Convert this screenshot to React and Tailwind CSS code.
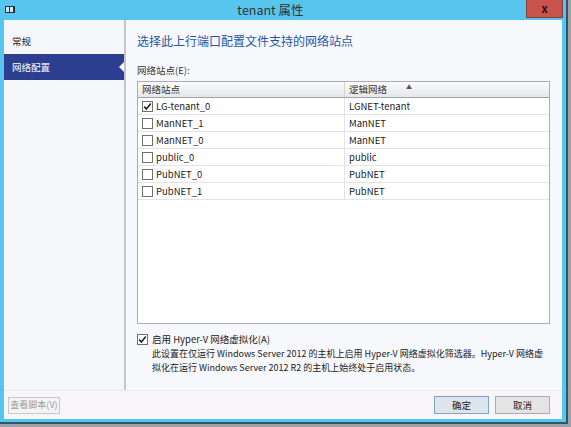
import React from 'react'

const rows = [
  { site: 'LG-tenant_0', net: 'LGNET-tenant', checked: true },
  { site: 'ManNET_1', net: 'ManNET' },
  { site: 'ManNET_0', net: 'ManNET' },
  { site: 'public_0', net: 'public' },
  { site: 'PubNET_0', net: 'PubNET' },
  { site: 'PubNET_1', net: 'PubNET' },
]

const font = { fontFamily: '"Noto Sans CJK SC", "Noto Sans", sans-serif' }

function Check({ checked }){
  return (
    <span className="w-[11px] h-[11px] border border-[#707070] bg-white flex items-center justify-center shrink-0">
      {checked && (
        <svg width="9" height="9" viewBox="0 0 9 9">
          <path d="M1.2 4.6 L3.4 7 L7.8 1.6" fill="none" stroke="#222" strokeWidth="1.6" />
        </svg>
      )}
    </span>
  )
}

export default function App(){
  return (
    <div className="w-[571px] h-[427px] bg-[#9aa3a8] text-[#222] text-[9.5px] overflow-hidden" style={font}>
      <div className="w-[568px] h-[424px] bg-[#58c5ee] border-b-2 border-r-2 border-[#2f5566] flex flex-col">
        {/* title bar */}
        <div className="h-[20px] flex items-start relative shrink-0">
          <div className="mt-[6px] ml-[5px] w-[10px] h-[7px] bg-[#1e3140] flex gap-[1px] p-[1px]">
            <span className="w-[3px] h-[5px] bg-[#cfe9f5]" />
            <span className="w-[3px] h-[5px] bg-[#cfe9f5]" />
          </div>
          <div className="flex-1 text-center text-[12.5px] leading-[20px] text-[#333]">tenant 属性</div>
          <div className="w-[37px] h-[18px] bg-[#c9544f] border border-[#8a3b39] border-t-0 mr-[3px] flex items-center justify-center text-[11px] font-bold text-[#2a0d0c]">x</div>
        </div>

        <div className="mx-[4px] flex-1 flex flex-col bg-[#f7f8fc] mb-[3px]">
          <div className="flex flex-1">
            {/* nav */}
            <div className="w-[120px] shrink-0 bg-[#f5f6fa] pt-[8px] flex flex-col">
              <div className="h-[26px] flex items-center pl-[8px] text-[#222]">常规</div>
              <div className="h-[26px] flex items-center pl-[8px] bg-[#2b3e8f] text-white relative">
                网络配置
                <span className="absolute right-0 top-[8px] w-0 h-0 border-y-[5px] border-y-transparent border-r-[5px] border-r-[#f7f8fc]" />
              </div>
            </div>
            <div className="w-[2px] shrink-0 bg-[#c5c6cc]" />

            {/* content */}
            <div className="flex-1 min-w-0 pl-[11px] pr-[12px] pt-[12px] flex flex-col">
              <div className="text-[12px] leading-[18px] text-[#1f57a4]">选择此上行端口配置文件支持的网络站点</div>
              <div className="mt-[12px] leading-[16px] text-[#333]">网络站点(E):</div>
              <div className="mt-[3px] h-[243px] border border-[#a9adb3] bg-white flex flex-col">
                <div className="h-[16px] flex bg-gradient-to-b from-[#fbfbfc] to-[#e6e7ea] border-b border-[#a0a3a8] text-[#333] shrink-0">
                  <div className="w-[207px] border-r border-[#d3d5d8] pl-[4px] leading-[15px]">网络站点</div>
                  <div className="flex-1 pl-[4px] leading-[15px] relative">
                    逻辑网络
                    <span className="absolute left-[61px] top-[-3px] text-[6px] text-[#555]">▲</span>
                  </div>
                </div>
                {rows.map(r => (
                  <div key={r.site} className="h-[17px] flex border-b border-[#e3e4e7] shrink-0">
                    <div className="w-[207px] border-r border-[#e3e4e7] flex items-center gap-[3px] pl-[4px]">
                      <Check checked={r.checked} />
                      <span>{r.site}</span>
                    </div>
                    <div className="flex-1 pl-[4px] flex items-center">{r.net}</div>
                  </div>
                ))}
              </div>

              <div className="mt-[8px] flex items-center gap-[4px] leading-[14px]">
                <Check checked />
                <span>启用 Hyper-V 网络虚拟化(A)</span>
              </div>
              <div className="mt-[1px] pl-[15px] leading-[14px] text-[9px] whitespace-nowrap">
                <div>此设置在仅运行 Windows Server 2012 的主机上启用 Hyper-V 网络虚拟化筛选器。Hyper-V 网络虚</div>
                <div>拟化在运行 Windows Server 2012 R2 的主机上始终处于启用状态。</div>
              </div>
            </div>
          </div>

          {/* bottom bar */}
          <div className="h-[29px] bg-[#f7f5f8] border-t border-[#ecebef] flex items-center px-[4px] shrink-0">
            <div className="w-[52px] h-[17px] border border-[#c8c8c8] bg-[#f4f4f4] text-[#9a9a9a] text-[9px] whitespace-nowrap flex items-center justify-center">查看脚本(V)</div>
            <div className="flex-1" />
            <div className="w-[55px] h-[18px] border border-[#7aa4c8] bg-[#dde4ec] flex items-center justify-center">确定</div>
            <div className="w-[55px] h-[18px] ml-[6px] mr-[8px] border border-[#acacac] bg-[#e4e4e4] flex items-center justify-center">取消</div>
          </div>
        </div>
      </div>
    </div>
  )
}
